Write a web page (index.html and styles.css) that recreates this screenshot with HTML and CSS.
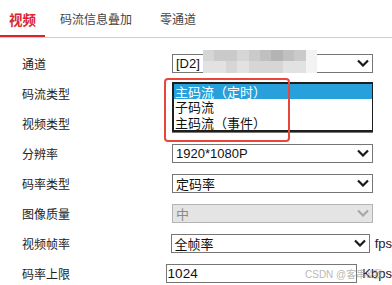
FILE: index.html
```html
<!DOCTYPE html>
<html lang="zh-CN">
<head>
  <meta charset="UTF-8" />
  <title>视频参数</title>
  <link rel="stylesheet" href="styles.css">
</head>
<body>
  <div class="page">
    <div class="tabs">
      <div class="tab active">视频</div>
      <div class="tab">码流信息叠加</div>
      <div class="tab">零通道</div>
    </div>

    <div class="form">
      <div class="row">
        <span class="label">通道</span>
        <div class="select">
          <span>[D2]</span>
          <svg class="arrow" width="12" height="8" viewBox="0 0 12 8"><path d="M1 1.5 L6 6.5 L11 1.5" /></svg>
          <div class="mosaic">
            <i class="g2"></i><i class="g3"></i><i class="g3"></i><i class="g2"></i><i class="g3"></i><i class="g4"></i><i class="g5"></i><i class="g4"></i><i class="g3"></i><i class="g0"></i>
            <i class="g1"></i><i class="g1"></i><i class="g2"></i><i class="g1"></i><i class="g2"></i><i class="g2"></i><i class="g2"></i><i class="g1"></i><i class="g1"></i><i class="g0"></i>
          </div>
        </div>
      </div>
      <div class="row">
        <span class="label">码流类型</span>
        <div class="select open">
          <ul class="listbox">
            <li class="selected">主码流（定时）</li>
            <li>子码流</li>
            <li>主码流（事件）</li>
          </ul>
        </div>
      </div>
      <div class="row">
        <span class="label">视频类型</span>
        <!-- 被下拉列表挡住 -->
        <div class="select"></div>
      </div>
      <div class="row">
        <span class="label">分辨率</span>
        <div class="select">
          <span>1920*1080P</span>
          <svg class="arrow" width="12" height="8" viewBox="0 0 12 8"><path d="M1 1.5 L6 6.5 L11 1.5" /></svg>
        </div>
      </div>
      <div class="row">
        <span class="label">码率类型</span>
        <div class="select">
          <span>定码率</span>
          <svg class="arrow" width="12" height="8" viewBox="0 0 12 8"><path d="M1 1.5 L6 6.5 L11 1.5" /></svg>
        </div>
      </div>
      <div class="row">
        <span class="label">图像质量</span>
        <div class="select disabled">
          <span>中</span>
          <svg class="arrow" width="12" height="8" viewBox="0 0 12 8"><path d="M1 1.5 L6 6.5 L11 1.5" /></svg>
        </div>
      </div>
      <div class="row">
        <span class="label">视频帧率</span>
        <div class="select">
          <span>全帧率</span>
          <svg class="arrow" width="12" height="8" viewBox="0 0 12 8"><path d="M1 1.5 L6 6.5 L11 1.5" /></svg>
        </div>
        <span class="unit">fps</span>
      </div>
      <div class="row">
        <span class="label">码率上限</span>
        <div class="input">1024</div>
        <span class="unit">Kbps</span>
      </div>
    </div>

    <!-- 截图上的标注框和水印 -->
    <div class="mark"></div>
    <div class="watermark">CSDN @客串&amp;我</div>
  </div>
</body>
</html>
```

FILE: styles.css
```css
body {
  margin: 0;
  background: #fff;
  font-family: "Liberation Sans", Arial, "Noto Sans CJK SC", sans-serif;
  color: #222;
  overflow: hidden;
}
.page {
  position: relative;
  width: 392px;
  height: 285px;
  overflow: hidden;
}
.tabs {
  display: flex;
  height: 37px;
  border-bottom: 1px solid #cfcfcf;
  font-family: "Noto Sans CJK SC", sans-serif;
}
.tab {
  display: flex;
  align-items: center;
  padding: 0 14px;
  font-size: 12px;
  color: #444;
  box-sizing: border-box;
  height: 37px;
}
.tab.active {
  padding: 0 9px;
  margin-right: 1px;
  font-size: 13.5px;
  font-weight: bold;
  color: #d9262c;
  border-bottom: 2px solid #d9262c;
  padding-top: 2px;
}
.form {
  margin-top: 10px;
}
.row {
  display: flex;
  align-items: center;
  height: 30px;
  padding-left: 22px;
}
.label {
  width: 150px;
  font-family: "Noto Sans CJK SC", sans-serif;
  font-size: 12px;
  color: #222;
}
.select, .input {
  position: relative;
  box-sizing: border-box;
  width: 201px;
  height: 19px;
  border: 1px solid #767676;
  background: #fff;
  display: flex;
  align-items: center;
  justify-content: space-between;
  padding: 0 3px 0 3px;
  font-size: 13px;
  color: #111;
}
.input {
  width: 200px;
  padding-left: 1px;
  font-size: 13.5px;
}
.arrow {
  fill: none;
  stroke: #1a1a1a;
  stroke-width: 2.2;
}
.select.disabled {
  background: #e4e4e4;
  border-color: #b4b4b4;
  color: #8a8a8a;
}
.select.disabled .arrow {
  stroke: #a8a8a8;
}
.select.open {
  z-index: 2;
  border: none;
}
.listbox {
  position: absolute;
  left: 0;
  top: -2px;
  width: 201px;
  box-sizing: border-box;
  margin: 0;
  padding: 0;
  list-style: none;
  background: #fff;
  border: 2px solid #1e1e1e;
  border-right-width: 1.5px;
}
.listbox li {
  height: 15.5px;
  line-height: 15.5px;
  padding-left: 1px;
  font-family: "Noto Sans CJK SC", sans-serif;
  font-size: 13px;
  color: #111;
}
.listbox li.selected {
  background: #27a0dc;
  color: #fff;
}
.unit {
  margin-left: 5px;
  font-size: 13px;
  color: #222;
  white-space: nowrap;
}
.mosaic {
  position: absolute;
  left: 30px;
  top: -5px;
  width: 114px;
  height: 23px;
  display: grid;
  grid-template-columns: repeat(10, 1fr);
  grid-template-rows: repeat(2, 1fr);
}
.mosaic .g0 { background: #f3f3f3; }
.mosaic .g1 { background: #e2e2e2; }
.mosaic .g2 { background: #d6d6d6; }
.mosaic .g3 { background: #cacaca; }
.mosaic .g4 { background: #c0c0c0; }
.mosaic .g5 { background: #b4b4b4; }
.mark {
  position: absolute;
  z-index: 3;
  left: 164px;
  top: 78px;
  width: 126px;
  height: 64px;
  box-sizing: border-box;
  border: 2.5px solid #e8463c;
  border-radius: 4px;
}
.watermark {
  position: absolute;
  z-index: 3;
  left: 305px;
  top: 266px;
  font-size: 10px;
  color: rgba(160, 160, 160, 0.75);
  font-family: "Liberation Sans", "Noto Sans CJK SC", sans-serif;
  white-space: nowrap;
}
```
